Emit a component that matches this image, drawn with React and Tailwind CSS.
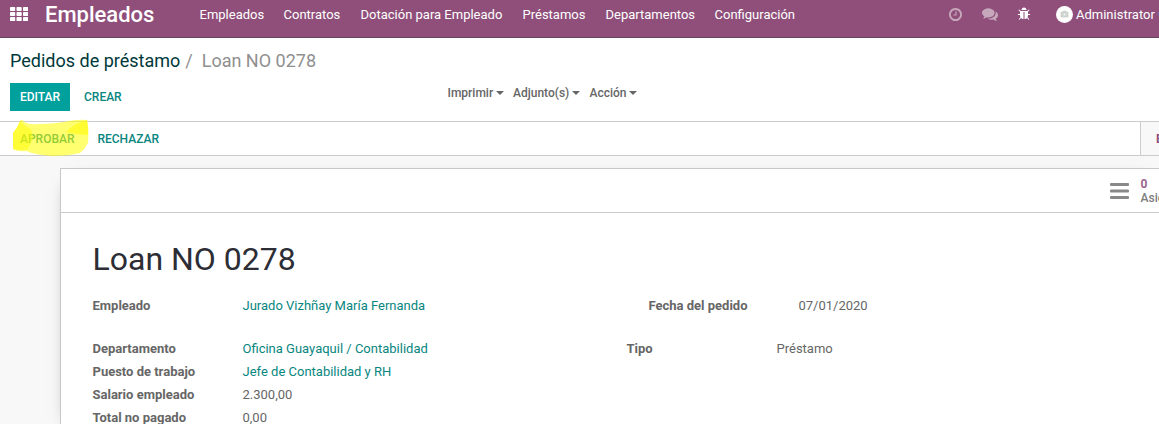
const MENU = [
  ['Empleados', 'w-[84px]'],
  ['Contratos', 'w-[77px]'],
  ['Dotación para Empleado', 'w-[162px]'],
  ['Préstamos', 'w-[83px]'],
  ['Departamentos', 'w-[109px]'],
  ['Configuración', 'w-[100px]'],
];

function GridIcon() {
  return (
    <svg viewBox="0 0 18 14" className="h-[14px] w-[18px] shrink-0" fill="#fff">
      {[0, 5, 10].map((y) =>
        [0, 6.5, 13].map((x) => <rect key={`${x}-${y}`} x={x} y={y} width="5.2" height="4.1" rx="0.8" />)
      )}
    </svg>
  );
}

function ClockIcon() {
  return (
    <svg viewBox="0 128 1536 1536" className="h-[13px] w-[13px] shrink-0" fill="currentColor">
      <path d="M896 544v448q0 14-9 23t-23 9h-320q-14 0-23-9t-9-23v-64q0-14 9-23t23-9h224v-352q0-14 9-23t23-9h64q14 0 23 9t9 23zM1312 896q0-148-73-273t-198-198-273-73-273 73-198 198-73 273 73 273 198 198 273 73 273-73 198-198 73-273zM1536 896q0 209-103 385.5t-279.5 279.5-385.5 103-385.5-103-279.5-279.5-103-385.5 103-385.5 279.5-279.5 385.5-103 385.5 103 279.5 279.5 103 385.5z" />
    </svg>
  );
}

function CommentsIcon() {
  return (
    <svg viewBox="0 0 1792 1792" className="h-4 w-4 shrink-0" fill="currentColor">
      <path d="M1408 768q0 139-94 257t-256.5 186.5-353.5 68.5q-86 0-176-16-124 88-278 128-36 9-86 16h-3q-11 0-20.5-8t-11.5-21q-1-3-1-6.5t.5-6.5 2-6l2.5-5 3.5-5.5 4-5 4.5-5 4-4.5q5-6 23-25t26-29.5 22.5-29 25-38.5 20.5-44q-124-72-195-177t-71-224q0-139 94-257t256.5-186.5 353.5-68.5 353.5 68.5 256.5 186.5 94 257zm384 256q0 120-71 224.5t-195 176.5q10 24 20.5 44t25 38.5 22.5 29 26 29.5 23 25q1 1 4 4.5t4.5 5 4 5 3.5 5.5l2.5 5 2 6 .5 6.5-1 6.5q-3 14-13 22t-22 7q-50-7-86-16-154-40-278-128-90 16-176 16-271 0-472-132 58 4 88 4 161 0 309-45t264-129q125-92 192-212t67-254q0-77-23-152 129 71 204 178t75 230z" />
    </svg>
  );
}

function BugIcon() {
  return (
    <svg viewBox="0 0 1792 1792" className="h-[14px] w-[14px] shrink-0" fill="#fff">
      <path d="M1696 960q0 26-19 45t-45 19h-224q0 171-67 290l208 209q19 19 19 45t-19 45q-18 19-45 19t-45-19l-198-197q-5 5-15 13t-42 28.5-65 36.5-82 29-97 13v-896h-128v896q-51 0-101.5-13.5t-87-33-66-39-43.5-32.5l-15-14-183 207q-20 21-48 21-24 0-43-16-19-18-20.5-44.5t15.5-46.5l202-227q-58-114-58-274h-224q-26 0-45-19t-19-45 19-45 45-19h224v-294l-173-173q-19-19-19-45t19-45 45-19 45 19l173 173h844l173-173q19-19 45-19t45 19 19 45-19 45l-173 173v294h224q26 0 45 19t19 45zm-480-576h-640q0-133 93.5-226.5t226.5-93.5 226.5 93.5 93.5 226.5z" />
    </svg>
  );
}

function Avatar() {
  return (
    <svg viewBox="0 0 17 17" className="h-[17px] w-[17px] shrink-0">
      <circle cx="8.5" cy="8.5" r="8.5" fill="#fff" />
      <path d="M5 6h1.8l.7-1h2l.7 1H12v5H5z" fill="#d3d8d3" stroke="#bfc6c0" strokeWidth="0.6" />
      <circle cx="8.5" cy="8.4" r="1.5" fill="#f4f6f4" stroke="#b4bdb6" strokeWidth="0.5" />
    </svg>
  );
}

function Caret() {
  return (
    <svg viewBox="0 0 8 4" className="h-1 w-2 shrink-0" fill="#666">
      <path d="M0 0h8L4 4z" />
    </svg>
  );
}

function Highlight() {
  return (
    <svg viewBox="0 0 78 38" className="pointer-events-none absolute -top-[3px] left-[12px] h-[38px] w-[78px]">
      <path d="M1 14Q6 8 8 2Q10 -1 12 3q6 3 14 2 14 0 26-2Q66 0 75 1q2 10 1 23-3 6-8 10-12 3-28 3-17-1-26-5-8 1-13-2z" fill="#ffff00" fillOpacity="0.56" />
      <path d="M1 14Q6 8 8 2q4 5 11 8l2 9-5 11Q8 32 1 30z" fill="#fffb00" fillOpacity="0.5" />
      <path d="M54 13Q63 4 75 1q2 8 1 15-9 0-22-3z" fill="#fffb00" fillOpacity="0.55" />
    </svg>
  );
}

function Field({ label, value, link }) {
  return (
    <div className="flex h-[23px] items-center leading-[20px]">
      <span className="w-[150px] shrink-0 font-bold text-[#666]">{label}</span>
      <span className={link ? 'text-[#08867f]' : 'text-[#666]'}>{value}</span>
    </div>
  );
}

export default function App() {
  return (
    <div className="flex h-[424px] w-[1159px] flex-col overflow-hidden whitespace-nowrap bg-[#f8f8f8] font-['Roboto',sans-serif] text-[13px] text-[#666]">
      <header className="flex h-[38px] shrink-0 border-b border-[#68465f] bg-[#8f4f7a] pl-[10px] text-white">
        <div className="flex h-[29px] w-[189.5px] items-center">
          <span className="-mt-px flex"><GridIcon /></span>
          <span className="ml-[17px] text-[22px] font-medium leading-none">Empleados</span>
        </div>
        <nav className="flex h-[29px] items-center">
          {MENU.map(([name, width]) => (
            <span key={name} className={`${width} shrink-0`}>{name}</span>
          ))}
        </nav>
        <div className="ml-auto flex h-[28px] w-[210px] shrink-0 items-center text-[#c7a7bc]">
          <ClockIcon />
          <span className="ml-5 flex"><CommentsIcon /></span>
          <span className="ml-[19px] flex"><BugIcon /></span>
          <span className="ml-[25px] flex"><Avatar /></span>
          <span className="ml-[3px] mt-px text-white">Administrator</span>
          <span className="ml-[3.5px] h-1 w-2 shrink-0 bg-[#7c5fae]" />
        </div>
      </header>

      <section className="flex h-[84px] shrink-0 flex-col border-b border-[#ccc] bg-white px-[10px]">
        <div className="flex h-[45px] items-center text-[18px]">
          <span className="text-[#00383a]">Pedidos de préstamo</span>
          <span className="ml-[5px] text-[#8f8f8f]">/</span>
          <span className="ml-[9px] text-[#8f8f8f]">Loan NO 0278</span>
        </div>
        <div className="flex h-7 text-[12px] font-medium">
          <div className="flex w-[437.5px] items-center">
            <button className="h-7 w-[60px] bg-[#00a09d] text-white">EDITAR</button>
            <button className="ml-[14px] text-[#08867f]">CREAR</button>
          </div>
          <div className="flex h-5 items-center">
            <span className="flex w-[65.5px] items-center gap-[3px]">Imprimir <Caret /></span>
            <span className="flex w-[76.5px] items-center gap-[3px]">Adjunto(s) <Caret /></span>
            <span className="flex items-center gap-[2px]">Acción <Caret /></span>
          </div>
        </div>
      </section>

      <section className="relative flex h-[34px] shrink-0 items-center border-b border-[#ccc] bg-white text-[12px] font-medium text-[#08867f]">
        <button className="ml-5 w-[77.4px] text-left">APROBAR</button>
        <button>RECHAZAR</button>
        <div className="ml-auto flex h-full w-[19px] items-center overflow-hidden border-l border-[#ccc] bg-[#f8f8f8] pl-[15px] font-bold text-[#8f4f7a]">BORRADOR</div>
        <Highlight />
      </section>

      <main className="ml-[60px] mt-3 flex flex-1 flex-col border-l border-t border-[#c8c8c8] bg-white shadow-[0_5px_20px_-15px_#000]">
        <div className="flex h-[44px] shrink-0 justify-end border-b border-[#ccc]">
          <div className="flex w-[49px] items-center overflow-hidden text-[12px] font-medium">
            <svg viewBox="0 0 19 16" className="mr-[11.5px] h-4 w-[19px] shrink-0" fill="#888">
              <rect width="19" height="3" rx="1" />
              <rect y="6.5" width="19" height="3" rx="1" />
              <rect y="13" width="19" height="3" rx="1" />
            </svg>
            <div className="mt-px leading-[14px] text-[#7c7c7c]">
              <div className="font-bold text-[#9b6490]">0</div>
              <div>Asientos</div>
            </div>
          </div>
        </div>
        <div className="pl-[31.5px]">
          <h1 className="mt-[27px] h-[54px] text-[32px] leading-[38px] text-[#2d2d35]">Loan NO 0278</h1>
          <div className="flex">
            <div className="w-[556px]"><Field label="Empleado" value="Jurado Vizhñay María Fernanda" link /></div>
            <Field label="Fecha del pedido" value="07/01/2020" />
          </div>
          <div className="mt-5 flex items-start">
            <div className="w-[534px]">
              <Field label="Departamento" value="Oficina Guayaquil / Contabilidad" link />
              <Field label="Puesto de trabajo" value="Jefe de Contabilidad y RH" link />
              <Field label="Salario empleado" value="2.300,00" />
              <Field label="Total no pagado" value="0,00" />
            </div>
            <Field label="Tipo" value="Préstamo" />
          </div>
        </div>
      </main>
    </div>
  );
}
